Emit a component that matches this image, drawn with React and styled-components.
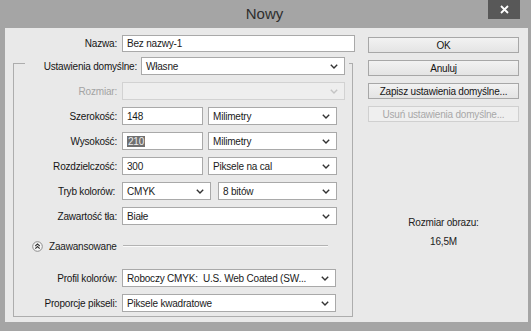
import React from 'react';
import styled, { createGlobalStyle } from 'styled-components';

// Base page styles
const GlobalStyle = createGlobalStyle`
  html, body {
    margin: 0;
    padding: 0;
    background: #a4a4a4;
  }
  body {
    font-family: "Liberation Sans", Arial, sans-serif;
    font-size: 10px;
    letter-spacing: -0.2px;
    color: #1a1a1a;
  }
  * { box-sizing: border-box; }
`;

// Window frame
const Window = styled.div`
  width: 531px;
  height: 331px;
  background: #a5a5a5;
  display: flex;
  flex-direction: column;
  padding: 0 3px 9px 5px;
`;

const TitleBar = styled.div`
  height: 28px;
  display: grid;
  grid-template-columns: 1fr auto 1fr;
  align-items: center;
`;

const Title = styled.div`
  grid-column: 2;
  font-size: 15px;
  letter-spacing: 0;
  color: #2e2e2e;
  margin: -2px 4px 0 0;
`;

const CloseButton = styled.div`
  grid-column: 3;
  justify-self: end;
  align-self: start;
  width: 32px;
  height: 19px;
  margin-right: 8px;
  background: #585858;
  display: flex;
  align-items: center;
  justify-content: center;
`;

const Content = styled.div`
  flex: 1;
  background: #e9e9e9;
  display: flex;
  gap: 12px;
  padding: 7px 9px 0 8px;
`;

// Left side: name + preset group
const LeftColumn = styled.div`
  width: 343px;
  display: flex;
  flex-direction: column;
`;

const Row = styled.div`
  display: flex;
  align-items: center;
  height: ${(p) => p.h || 18}px;
  gap: ${(p) => p.gap || 5}px;
`;

const Label = styled.div`
  width: ${(p) => p.w || 103}px;
  text-align: right;
  white-space: nowrap;
  color: ${(p) => (p.disabled ? '#a3a3a3' : '#151515')};
`;

const Field = styled.div`
  width: ${(p) => p.w}px;
  height: 100%;
  background: #fff;
  border: 1px solid #a9a9a9;
  display: flex;
  align-items: center;
  padding: 0 4px;
  white-space: nowrap;
`;

const Selected = styled.span`
  background: #707070;
  color: #ececec;
  padding: 0 1px;
`;

const SelectBox = styled.div`
  width: ${(p) => p.w}px;
  height: 100%;
  background: ${(p) => (p.disabled ? '#eeeeee' : '#fff')};
  border: 1px solid ${(p) => (p.disabled ? '#d2d2d2' : '#a9a9a9')};
  display: flex;
  align-items: center;
  justify-content: space-between;
  padding: 0 6px 0 4px;
  white-space: nowrap;
  overflow: hidden;
`;

const Chevron = ({ color = '#333' }) => (
  <svg width="8" height="5" viewBox="0 0 8 5">
    <polyline points="0.8,0.8 4,4 7.2,0.8" fill="none" stroke={color} strokeWidth="1.4" />
  </svg>
);

const Select = ({ w, disabled, children }) => (
  <SelectBox w={w} disabled={disabled}>
    <span>{children}</span>
    <Chevron color={disabled ? '#c4c4c4' : '#333'} />
  </SelectBox>
);

const Group = styled.fieldset`
  width: 340px;
  margin: 0;
  padding: 7px 0 4px 0;
  border: 1px solid #adadad;
`;

const Legend = styled.legend`
  margin-left: 11px;
  padding: 5px 4px 0 0;
  display: flex;
  align-items: center;
  gap: 4px;
  height: 23px;
`;

const LegendSelect = styled.div`
  height: 18px;
  display: flex;
`;

const GroupRows = styled.div`
  display: flex;
  flex-direction: column;
  gap: 7px;
`;

const AdvancedRow = styled.div`
  display: flex;
  align-items: center;
  height: 16px;
  padding-left: 18px;
  margin: 6px 0 8px;
`;

const AdvancedText = styled.span`
  margin-left: 6px;
`;

const Rule = styled.div`
  flex: 1;
  border-top: 1px solid #b3b3b3;
  border-bottom: 1px solid #fafafa;
  margin: 0 24px 0 6px;
`;

// Right side: buttons + info
const RightColumn = styled.div`
  width: 151px;
  display: flex;
  flex-direction: column;
  gap: 7px;
  padding-top: 2px;
`;

const Button = styled.div`
  height: 16px;
  border: 1px solid ${(p) => (p.disabled ? '#d0d0d0' : '#a7a7a7')};
  background: ${(p) => (p.disabled ? '#efefef' : 'linear-gradient(#f2f2f2, #e4e4e4)')};
  color: ${(p) => (p.disabled ? '#a8a8a8' : '#151515')};
  display: flex;
  align-items: center;
  justify-content: center;
`;

const Info = styled.div`
  margin-top: 88px;
  display: flex;
  flex-direction: column;
  align-items: center;
  gap: 8px;
  color: #222;
`;

const App = () => (
  <>
    <GlobalStyle />
    <Window>
      <TitleBar>
        <Title>Nowy</Title>
        <CloseButton>
          <svg width="9" height="9" viewBox="0 0 9 9">
            <path d="M1 1 L8 8 M8 1 L1 8" stroke="#fff" strokeWidth="1.8" />
          </svg>
        </CloseButton>
      </TitleBar>
      <Content>
        <LeftColumn>
          <Row h={17} gap={5}>
            <Label w={104}>Nazwa:</Label>
            <Field w={233}>Bez nazwy-1</Field>
          </Row>
          <Group>
            <Legend>
              <Label w={112}>Ustawienia domyślne:</Label>
              <LegendSelect>
                <Select w={204}>Własne</Select>
              </LegendSelect>
            </Legend>
            <GroupRows>
              <Row>
                <Label disabled>Rozmiar:</Label>
                <Select w={223} disabled />
              </Row>
              <Row>
                <Label>Szerokość:</Label>
                <Field w={81}>148</Field>
                <Select w={129}>Milimetry</Select>
              </Row>
              <Row>
                <Label>Wysokość:</Label>
                <Field w={81}>
                  <Selected>210</Selected>
                </Field>
                <Select w={129}>Milimetry</Select>
              </Row>
              <Row>
                <Label>Rozdzielczość:</Label>
                <Field w={81}>300</Field>
                <Select w={129}>Piksele na cal</Select>
              </Row>
              <Row gap={7}>
                <Label w={101}>Tryb kolorów:</Label>
                <Select w={89}>CMYK</Select>
                <Select w={119}>8 bitów</Select>
              </Row>
              <Row>
                <Label>Zawartość tła:</Label>
                <Select w={215}>Białe</Select>
              </Row>
              <AdvancedRow>
                <svg width="11" height="11" viewBox="0 0 11 11">
                  <circle cx="5.5" cy="5.5" r="4.8" fill="#f6f6f6" stroke="#8c8c8c" />
                  <polyline points="3.3,5 5.5,2.9 7.7,5" fill="none" stroke="#333" strokeWidth="1.1" />
                  <polyline points="3.3,7.6 5.5,5.5 7.7,7.6" fill="none" stroke="#333" strokeWidth="1.1" />
                </svg>
                <AdvancedText>Zaawansowane</AdvancedText>
                <Rule />
              </AdvancedRow>
              <Row>
                <Label>Profil kolorów:</Label>
                <Select w={214}>Roboczy CMYK:&nbsp; U.S. Web Coated (SW...</Select>
              </Row>
              <Row>
                <Label>Proporcje pikseli:</Label>
                <Select w={214}>Piksele kwadratowe</Select>
              </Row>
            </GroupRows>
          </Group>
        </LeftColumn>
        <RightColumn>
          <Button>OK</Button>
          <Button>Anuluj</Button>
          <Button>Zapisz ustawienia domyślne...</Button>
          <Button disabled>Usuń ustawienia domyślne...</Button>
          <Info>
            <div>Rozmiar obrazu:</div>
            <div>16,5M</div>
          </Info>
        </RightColumn>
      </Content>
    </Window>
  </>
);

export default App;
